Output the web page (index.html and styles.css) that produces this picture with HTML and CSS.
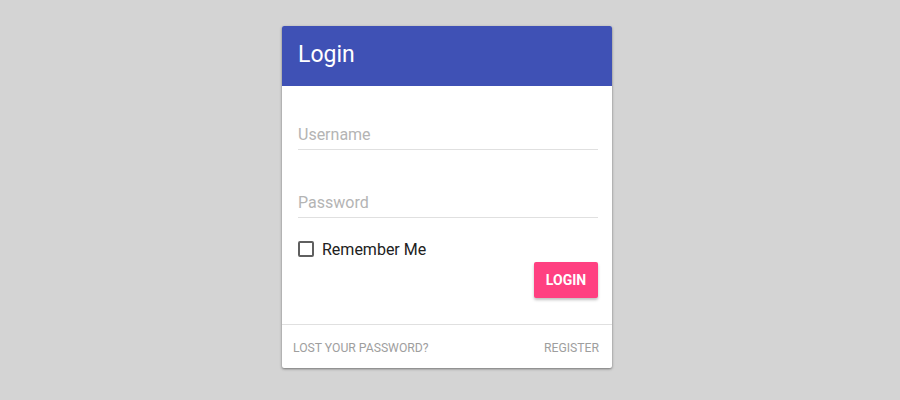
FILE: index.html
```html
<!DOCTYPE html>
<html>
<head>
<meta charset="utf-8">
<link rel="stylesheet" href="styles.css">
</head>
<body>
<div class="card">
  <div class="card-header">Login</div>
  <div class="card-body">
    <div class="field first"><div class="input">Username</div></div>
    <div class="field second"><div class="input">Password</div></div>
    <label class="check-row"><span class="box"></span><span class="check-label">Remember Me</span></label>
    <div class="actions"><button class="btn">LOGIN</button></div>
  </div>
  <div class="card-footer">
    <span class="link">LOST YOUR PASSWORD?</span>
    <span class="link">REGISTER</span>
  </div>
</div>
</body>
</html>
```
FILE: styles.css
```css
html, body {
  margin: 0;
  padding: 0;
  background: #d4d4d4;
  font-family: Roboto, "Liberation Sans", Arial, sans-serif;
}
body {
  height: 400px;
  overflow: hidden;
}
.card {
  width: 330px;
  margin: 26px 0 0 282px;
  background: #fff;
  border-radius: 2px;
  box-shadow: 0 1px 3px rgba(0,0,0,0.3), 0 1px 2px rgba(0,0,0,0.2);
  overflow: hidden;
}
.card-header {
  height: 60px;
  line-height: 58px;
  background: #3f51b5;
  color: #fff;
  font-size: 23px;
  padding-left: 16px;
}
.card-body {
  padding: 0 14px 26px 16px;
  border-bottom: 1px solid #e0e0e0;
}
.field.first { padding-top: 34px; }
.field.second { padding-top: 38px; }
.input {
  height: 29px;
  line-height: 29px;
  font-size: 16px;
  color: #b4b4b4;
  border-bottom: 1px solid #e0e0e0;
}
.check-row {
  display: flex;
  align-items: center;
  margin-top: 23px;
  height: 16px;
}
.box {
  width: 12px;
  height: 12px;
  border: 2px solid #5f5f5f;
  border-radius: 2px;
  box-sizing: content-box;
}
.check-label {
  margin-left: 8px;
  font-size: 16px;
  color: #212121;
}
.actions {
  display: flex;
  justify-content: flex-end;
  margin-top: 5px;
}
.btn {
  width: 64px;
  height: 36px;
  border: none;
  border-radius: 2px;
  background: #ff4081;
  color: #fff;
  font-family: Roboto, "Liberation Sans", Arial, sans-serif;
  font-weight: bold;
  font-size: 14px;
  padding: 0;
  box-shadow: 0 2px 3px rgba(0,0,0,0.25);
}
.card-footer {
  height: 43px;
  box-sizing: border-box;
  padding: 2px 13px 0 11px;
  display: flex;
  align-items: center;
  justify-content: space-between;
}
.link {
  font-size: 12.2px;
  color: #9e9e9e;
}
```
